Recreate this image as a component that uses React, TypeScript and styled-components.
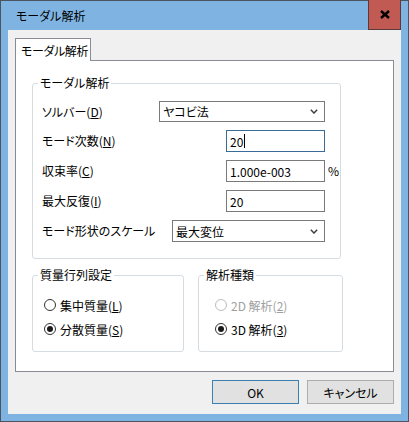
import styled, { createGlobalStyle } from 'styled-components';

const GlobalStyle = createGlobalStyle`
  * { box-sizing: border-box; }
  body {
    margin: 0;
    background: #ffffff;
    font-family: "Noto Sans CJK JP", "Noto Sans", sans-serif;
    font-size: 12px;
    color: #000;
    font-feature-settings: "palt";
  }
`;

const Window = styled.div`
  width: 409px;
  height: 422px;
  border: 1px solid #4b5560;
  background: #7fb4e2;
  padding: 0 7px 7px 7px;
  display: flex;
  flex-direction: column;
`;

const TitleBar = styled.div`
  height: 30px;
  display: flex;
  align-items: center;
  justify-content: space-between;
`;

const TitleText = styled.span`
  margin-left: 8px;
  line-height: 16px;
`;

const CloseButton = styled.div`
  width: 33px;
  height: 30px;
  margin-top: -1px;
  align-self: flex-start;
  background: #c15a52;
  border: 1px solid #5c3a3c;
  border-top: none;
  display: flex;
  align-items: center;
  justify-content: center;
`;

const Client = styled.div`
  flex: 1;
  background: #f0f0f0;
  padding: 8px 7px 10px 7px;
  display: flex;
  flex-direction: column;
`;

const Tab = styled.div`
  position: relative;
  z-index: 1;
  width: 76px;
  height: 23px;
  margin-bottom: -1px;
  background: #fff;
  border: 1px solid #898c95;
  border-bottom: none;
  padding-left: 5px;
  display: flex;
  align-items: center;
  white-space: nowrap;
  letter-spacing: -0.4px;
`;

const Panel = styled.div`
  height: 312px;
  background: #fff;
  border: 1px solid #898c95;
  padding: 14px 0 0 16px;
  display: flex;
  flex-direction: column;
`;

const Group = styled.fieldset<{ $width: number }>`
  margin: 0;
  padding: 0;
  width: ${({ $width }) => $width}px;
  border: 1px solid #d5dde3;
  border-radius: 3px;
  min-width: 0;
`;

const Legend = styled.legend`
  margin-left: 5px;
  padding: 0 2px;
  line-height: 16px;
`;

const FormGrid = styled.div`
  display: grid;
  grid-template-columns: 1fr auto 15px;
  grid-template-rows: 21px 22px 22px 22px 22px;
  row-gap: 8px;
  align-items: center;
  padding: 10px 0 16px 9px;
`;

const Label = styled.span`
  line-height: 16px;
  white-space: nowrap;
`;

const Suffix = styled.span`
  padding-left: 3px;
  line-height: 16px;
`;

const Combo = styled.div<{ $width: number }>`
  justify-self: end;
  width: ${({ $width }) => $width}px;
  height: 100%;
  border: 1px solid #7a7a7a;
  background: #fff;
  padding: 0 6px 0 3px;
  display: flex;
  align-items: center;
  justify-content: space-between;
`;

const Input = styled.div<{ $focused?: boolean }>`
  justify-self: end;
  width: 99px;
  height: 100%;
  border: 1px solid ${({ $focused }) => ($focused ? '#3a6b96' : '#7a7a7a')};
  background: #fff;
  padding-left: 3px;
  display: flex;
  align-items: center;
`;

const Caret = styled.span`
  display: inline-block;
  width: 1px;
  height: 14px;
  background: #000;
  margin-left: 1px;
`;

const GroupRow = styled.div`
  display: flex;
  gap: 14px;
  margin-top: 8px;
`;

const RadioList = styled.div<{ $indent: number }>`
  display: flex;
  flex-direction: column;
  gap: 8px;
  padding: 14px 0 14px ${({ $indent }) => $indent}px;
`;

const RadioItem = styled.div<{ $disabled?: boolean }>`
  display: flex;
  align-items: center;
  gap: 4px;
  height: 16px;
  color: ${({ $disabled }) => ($disabled ? '#a0a0a0' : '#000')};
`;

const RadioCircle = styled.span<{ $checked?: boolean; $disabled?: boolean }>`
  width: 12px;
  height: 12px;
  border-radius: 50%;
  border: 1px solid ${({ $disabled }) => ($disabled ? '#bcbcbc' : '#333')};
  background: #fff;
  display: flex;
  align-items: center;
  justify-content: center;

  &::after {
    content: '';
    width: 6px;
    height: 6px;
    border-radius: 50%;
    background: #1a1a1a;
    display: ${({ $checked }) => ($checked ? 'block' : 'none')};
  }
`;

const ButtonBar = styled.div`
  display: flex;
  justify-content: flex-end;
  gap: 8px;
  margin-top: 8px;
`;

const Button = styled.div<{ $default?: boolean }>`
  width: 87px;
  height: 24px;
  background: #e1e1e1;
  border: 1px solid ${({ $default }) => ($default ? '#3c7fb1' : '#adadad')};
  display: flex;
  align-items: center;
  justify-content: center;
`;

const Chevron = () => (
  <svg width="8" height="5" viewBox="0 0 8 5">
    <path d="M0.8 0.8 L4 4 L7.2 0.8" fill="none" stroke="#404040" strokeWidth="1.5" />
  </svg>
);

const CloseIcon = () => (
  <svg width="10" height="9" viewBox="0 0 10 9">
    <path d="M1 1 L9 8 M9 1 L1 8" stroke="#000" strokeWidth="2.4" />
  </svg>
);

export default function App() {
  return (
    <>
      <GlobalStyle />
      <Window>
        <TitleBar>
          <TitleText>モーダル解析</TitleText>
          <CloseButton>
            <CloseIcon />
          </CloseButton>
        </TitleBar>
        <Client>
          <Tab>モーダル解析</Tab>
          <Panel>
            <Group $width={309}>
              <Legend>モーダル解析</Legend>
              <FormGrid>
                <Label>ソルバー(<u>D</u>)</Label>
                <Combo $width={166}>
                  <span>ヤコビ法</span>
                  <Chevron />
                </Combo>
                <span />

                <Label>モード次数(<u>N</u>)</Label>
                <Input $focused>
                  20<Caret />
                </Input>
                <span />

                <Label>収束率(<u>C</u>)</Label>
                <Input>1.000e-003</Input>
                <Suffix>%</Suffix>

                <Label>最大反復(<u>I</u>)</Label>
                <Input>20</Input>
                <span />

                <Label>モード形状のスケール</Label>
                <Combo $width={153}>
                  <span>最大変位</span>
                  <Chevron />
                </Combo>
                <span />
              </FormGrid>
            </Group>
            <GroupRow>
              <Group $width={152}>
                <Legend>質量行列設定</Legend>
                <RadioList $indent={11}>
                  <RadioItem>
                    <RadioCircle />
                    <span>集中質量(<u>L</u>)</span>
                  </RadioItem>
                  <RadioItem>
                    <RadioCircle $checked />
                    <span>分散質量(<u>S</u>)</span>
                  </RadioItem>
                </RadioList>
              </Group>
              <Group $width={145}>
                <Legend>解析種類</Legend>
                <RadioList $indent={16}>
                  <RadioItem $disabled>
                    <RadioCircle $disabled />
                    <span>2D 解析(<u>2</u>)</span>
                  </RadioItem>
                  <RadioItem>
                    <RadioCircle $checked />
                    <span>3D 解析(<u>3</u>)</span>
                  </RadioItem>
                </RadioList>
              </Group>
            </GroupRow>
          </Panel>
          <ButtonBar>
            <Button $default>OK</Button>
            <Button>キャンセル</Button>
          </ButtonBar>
        </Client>
      </Window>
    </>
  );
}
